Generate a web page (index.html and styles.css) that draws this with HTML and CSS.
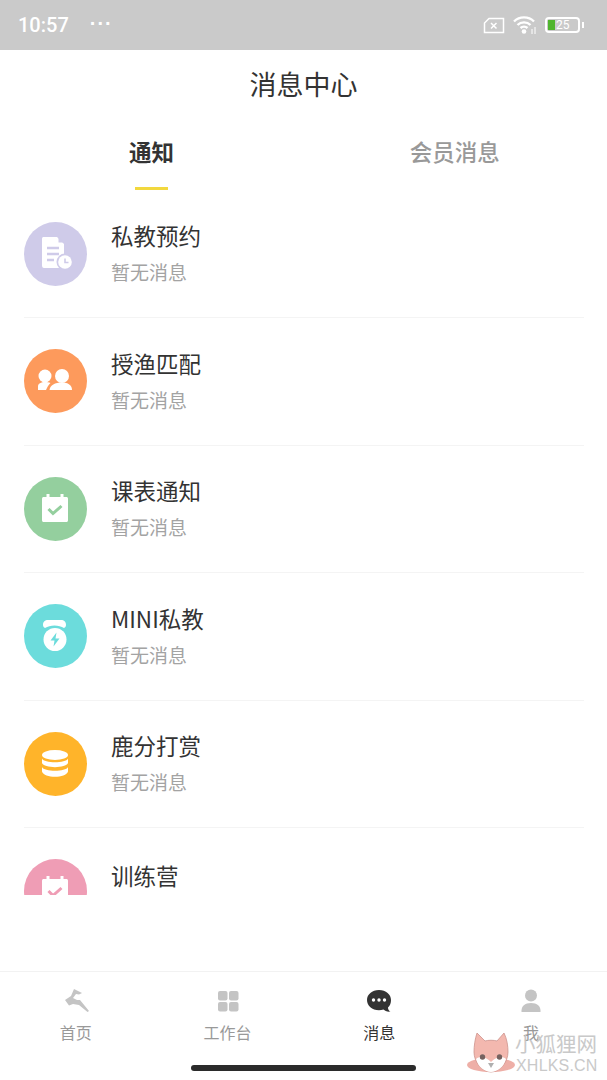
FILE: index.html
```html
<!DOCTYPE html>
<html lang="zh-CN">

<head>
    <meta charset="utf-8" />
    <title>消息中心</title>
    <link rel="stylesheet" href="styles.css">
</head>

<body>
    <div class="page">
        <div class="statusBar">
            <span class="time">10:57</span>
            <span class="dots">···</span>
            <span class="statusIcons">
                <svg width="22" height="17" viewBox="0 0 22 17">
                    <path d="M6 1.500H20.500V15.500H1.500V6Z" fill="none" stroke="#fff" stroke-width="1.500" />
                    <path d="M8 6L13.500 11.500M13.500 6L8 11.500" stroke="#fff" stroke-width="1.500" />
                </svg>
                <svg width="24" height="20" viewBox="0 0 24 20">
                    <path d="M1 6.500C6.500 1 15.500 1 21 6.500M4.500 10C8 6.500 14 6.500 17.500 10M7.500 13C9.500 11.200 12.500 11.200 14.500 13" fill="none" stroke="#fff" stroke-width="2.400" />
                    <circle cx="11" cy="16.500" r="2.300" fill="#fff" />
                    <path d="M19 14V19M22 12V19" stroke="#fff" stroke-width="1" />
                </svg>
                <span class="battery">
                    <span class="batteryLevel"></span>
                    <span class="batteryNum">25</span>
                </span>
                <span class="batteryTip"></span>
            </span>
        </div>

        <div class="title">消息中心</div>

        <div class="tabs">
            <a href="#" class="tab on">通知</a>
            <a href="#" class="tab">会员消息</a>
        </div>

        <ul class="list">
            <li class="item">
                <span class="icon purple">
                    <svg width="64" height="64" viewBox="0 0 64 64">
                        <path d="M20 15H33L40 22V43C40 45 39 46 37 46H20C18.500 46 18 45 18 43V17C18 15.500 18.500 15 20 15Z" fill="#fff" />
                        <path d="M34.500 15L40 20.500H34.500Z" fill="#cfcbe9" />
                        <path d="M23 26H35M23 32H35M23 38H30" stroke="#cfcbe9" stroke-width="2.400" />
                        <circle cx="41" cy="40" r="8.500" fill="#cfcbe9" />
                        <circle cx="41" cy="40" r="6.800" fill="#fff" />
                        <path d="M41 36.500V40.500H44.500" fill="none" stroke="#cfcbe9" stroke-width="1.600" />
                    </svg>
                </span>
                <div class="text">
                    <div class="name">私教预约</div>
                    <div class="desc">暂无消息</div>
                </div>
            </li>
            <li class="item">
                <span class="icon orange">
                    <svg width="64" height="64" viewBox="0 0 64 64">
                        <circle cx="21" cy="27" r="6.500" fill="#fff" />
                        <path d="M14 41V37.500C14 34.500 17 33 21 33C23 33 25 33.300 26.500 34C24.500 36 23 38.500 22 41Z" fill="#fff" />
                        <circle cx="38" cy="27" r="7" fill="#fff" />
                        <path d="M25.500 41C26 36 31 33.500 38 33.500C44 33.500 48 36 48 41Z" fill="#fff" />
                    </svg>
                </span>
                <div class="text">
                    <div class="name">授渔匹配</div>
                    <div class="desc">暂无消息</div>
                </div>
            </li>
            <li class="item">
                <span class="icon green">
                    <svg width="64" height="64" viewBox="0 0 64 64">
                        <use href="#calendar" />
                    </svg>
                </span>
                <div class="text">
                    <div class="name">课表通知</div>
                    <div class="desc">暂无消息</div>
                </div>
            </li>
            <li class="item">
                <span class="icon cyan">
                    <svg width="64" height="64" viewBox="0 0 64 64">
                        <path d="M19 21C19 17.500 21 16 24 16H37C40 16 42 17.500 42 21C42 22.500 41 23.500 40 24C35 20.500 26 20.500 21 24C20 23.500 19 22.500 19 21Z" fill="#fff" />
                        <circle cx="31" cy="35.500" r="11.500" fill="#fff" />
                        <path d="M32.500 28.500L26.500 36.500H30.500L29.500 42.500L35.500 34.500H31.500Z" fill="#6cdcdc" />
                    </svg>
                </span>
                <div class="text">
                    <div class="name">MINI私教</div>
                    <div class="desc">暂无消息</div>
                </div>
            </li>
            <li class="item">
                <span class="icon yellow">
                    <svg width="64" height="64" viewBox="0 0 64 64">
                        <ellipse cx="31" cy="23" rx="13" ry="5" fill="#fff" />
                        <path d="M18 26.500C20 31.500 42 31.500 44 26.500V31C42 36.500 20 36.500 18 31Z" fill="#fff" />
                        <path d="M18 35C20 40 42 40 44 35V39.500C42 46.500 20 46.500 18 39.500Z" fill="#fff" />
                    </svg>
                </span>
                <div class="text">
                    <div class="name">鹿分打赏</div>
                    <div class="desc">暂无消息</div>
                </div>
            </li>
            <li class="item">
                <span class="icon pink">
                    <svg width="64" height="64" viewBox="0 0 64 64">
                        <use href="#calendar" />
                    </svg>
                </span>
                <div class="text">
                    <div class="name">训练营</div>
                </div>
            </li>
        </ul>

        <div class="nav">
            <a href="#" class="navItem">
                <svg width="28" height="28" viewBox="0 0 28 28">
                    <path d="M12 2L20 6L17 7.500L14 7L11 11L15 13L18 13L27 24L25.500 25L17 18L11 17L7 18.500L3 13L9 9Z" fill="#c4c4c4" />
                </svg>
                <span>首页</span>
            </a>
            <a href="#" class="navItem">
                <svg width="28" height="28" viewBox="0 0 28 28">
                    <rect x="4" y="4" width="9.500" height="9.500" rx="2" fill="#c4c4c4" />
                    <rect x="15" y="4" width="9.500" height="9.500" rx="2" fill="#c4c4c4" />
                    <rect x="4" y="15" width="9.500" height="9.500" rx="2" fill="#c4c4c4" />
                    <rect x="15" y="15" width="9.500" height="9.500" rx="2" fill="#c4c4c4" />
                </svg>
                <span>工作台</span>
            </a>
            <a href="#" class="navItem on">
                <svg width="28" height="28" viewBox="0 0 28 28">
                    <path d="M14 3C21 3 26 7.500 26 13C26 16 25 18.500 23 20.500C23 22.500 24 24 25.500 24.500C22.500 25 20 24 18.500 22.500C17 23 15.500 23.200 14 23.200C7 23.200 2 18.700 2 13C2 7.500 7 3 14 3Z" fill="#333" />
                    <circle cx="8.500" cy="13" r="1.700" fill="#fff" />
                    <circle cx="14" cy="13" r="1.700" fill="#fff" />
                    <circle cx="19.500" cy="13" r="1.700" fill="#fff" />
                </svg>
                <span>消息</span>
            </a>
            <a href="#" class="navItem">
                <svg width="28" height="28" viewBox="0 0 28 28">
                    <circle cx="14" cy="8.500" r="6" fill="#c4c4c4" />
                    <path d="M4.500 25C4 19 8 16 14 16C20 16 24 19 23.500 25Z" fill="#c4c4c4" />
                </svg>
                <span>我</span>
            </a>
        </div>
        <div class="homeBar"></div>

        <div class="mark">
            <svg width="48" height="46" viewBox="0 0 48 46">
                <ellipse cx="24" cy="35" rx="24" ry="7" fill="#eda9a0" />
                <path d="M10 3L18 11C21 10 27 10 30 11L37 3C40 9 41 16 41 22C41 32 33 42 24 42C15 42 7 32 7 22C7 16 8 9 10 3Z" fill="#f2b3a9" stroke="#c98a84" stroke-width="0.800" />
                <path d="M9 29C14 25 20 28 24 32C28 28 34 25 39 29C37 37 30 42 24 42C18 42 11 37 9 29Z" fill="#fff" />
                <circle cx="15.500" cy="27" r="2.700" fill="#6b5553" />
                <circle cx="32.500" cy="27" r="2.700" fill="#6b5553" />
                <path d="M21 33H27L24 38Z" fill="#a9a9a9" />
            </svg>
            <div class="markText">
                <div class="markName">小狐狸网</div>
                <div class="markUrl">XHLKS.CN</div>
            </div>
        </div>

        <svg class="defs" width="0" height="0">
            <symbol id="calendar" viewBox="0 0 64 64">
                <path d="M20 20H42C43.500 20 44 20.500 44 22V43C44 44.500 43.500 45 42 45H20C18.500 45 18 44.500 18 43V22C18 20.500 18.500 20 20 20Z" fill="#fff" />
                <path d="M24 17V23M38 17V23" stroke="#fff" stroke-width="3" />
                <path d="M24.500 32L29 36.500L37.500 29" fill="none" stroke="currentColor" stroke-width="3" />
            </symbol>
        </svg>
    </div>
</body>

</html>
```

FILE: styles.css
```css
* {
    box-sizing: border-box;
}

body,
div,
span,
a,
ul,
li {
    margin: 0;
    padding: 0
}

a {
    text-decoration: none;
    color: inherit
}

ul {
    list-style: none
}

body {
    background: #fff;
    font-family: "Noto Sans CJK SC", "Noto Sans", sans-serif;
    color: #333;
}

.page {
    width: 607px;
    height: 1080px;
    position: relative;
    overflow: hidden;
    display: flex;
    flex-direction: column;
}

.statusBar {
    height: 50px;
    background: #cacaca;
    color: #fff;
    display: flex;
    align-items: center;
    padding: 0 0 0 18px;
}

.time {
    font-family: Roboto, sans-serif;
    font-size: 20px;
    font-weight: 500;
}

.dots {
    margin-left: 21px;
    font-family: "Liberation Sans", sans-serif;
    font-size: 20px;
    letter-spacing: 1px;
    font-weight: 700;
    margin-top: -3px;
}

.statusIcons {
    margin-left: auto;
    margin-right: 23px;
    display: flex;
    align-items: center;
}

.statusIcons svg {
    margin-right: 8px;
}

.battery {
    width: 35px;
    height: 16px;
    border: 2px solid #fff;
    border-radius: 4px;
    display: flex;
    align-items: center;
    padding-left: 1px;
}

.batteryLevel {
    width: 7px;
    height: 10px;
    background: #4fb52e;
}

.batteryNum {
    font-family: Roboto, sans-serif;
    font-size: 12px;
    line-height: 12px;
    margin-left: 1px;
}

.batteryTip {
    width: 2px;
    height: 6px;
    background: #fff;
    margin-left: 2px;
}

.title {
    height: 70px;
    line-height: 68px;
    text-align: center;
    font-size: 27px;
    color: #333;
}

.tabs {
    height: 70px;
    display: flex;
}

.tab {
    width: 50%;
    text-align: center;
    font-size: 22.500px;
    line-height: 62px;
    color: #999;
    font-weight: 500;
    position: relative;
}

.tab:first-child {
    width: 303px;
}

.tab.on {
    color: #333;
    font-weight: 700;
}

.tab.on::after {
    content: "";
    position: absolute;
    left: 135px;
    bottom: 0;
    width: 33px;
    height: 3px;
    background: #f2d83e;
}

.list {
    height: 705px;
    overflow: hidden;
    padding: 0.500px 23px 0 24px;
}

.item {
    height: 127.500px;
    display: flex;
    align-items: center;
    border-bottom: 1px solid #f4f4f4;
}

.item:last-child .text {
    margin-bottom: 32px;
}

.icon {
    width: 63px;
    height: 64px;
    border-radius: 50%;
    flex: none;
}

.icon svg {
    display: block;
}

.purple { background: #cfcbe9; }
.orange { background: #fd9a5c; }
.green { background: #94cf9e; color: #94cf9e; }
.cyan { background: #6cdcdc; }
.yellow { background: #ffb42a; }
.pink { background: #ef9db5; color: #ef9db5; }

.text {
    margin-left: 24px;
    padding-top: 2px;
}

.name {
    font-size: 22.500px;
    line-height: 30px;
    color: #333;
    margin-top: -2px;
}

.desc {
    margin-top: 7px;
    font-size: 19px;
    line-height: 30px;
    color: #a3a3a3;
}

.nav {
    height: 109px;
    margin-top: auto;
    border-top: 1px solid #f2f2f2;
    display: flex;
    padding-top: 15px;
}

.navItem {
    flex: 1;
    display: flex;
    flex-direction: column;
    align-items: center;
    font-size: 16px;
    line-height: 22px;
    color: #999;
}

.navItem svg {
    display: block;
    margin-bottom: 6px;
}

.navItem.on {
    color: #333;
}

.homeBar {
    position: absolute;
    left: 191px;
    top: 1065px;
    width: 225px;
    height: 6px;
    border-radius: 3px;
    background: #2b2b2b;
}

.mark {
    position: absolute;
    left: 467px;
    top: 1030px;
    display: flex;
    opacity: 0.92;
}

.markText {
    color: #c5c5c5;
}

.markName {
    font-size: 20.500px;
    line-height: 26px;
}

.markUrl {
    font-family: "Liberation Sans", sans-serif;
    font-size: 16px;
    line-height: 20px;
    letter-spacing: 0.200px;
    margin-left: 1px;
}

.defs {
    position: absolute;
}
```
